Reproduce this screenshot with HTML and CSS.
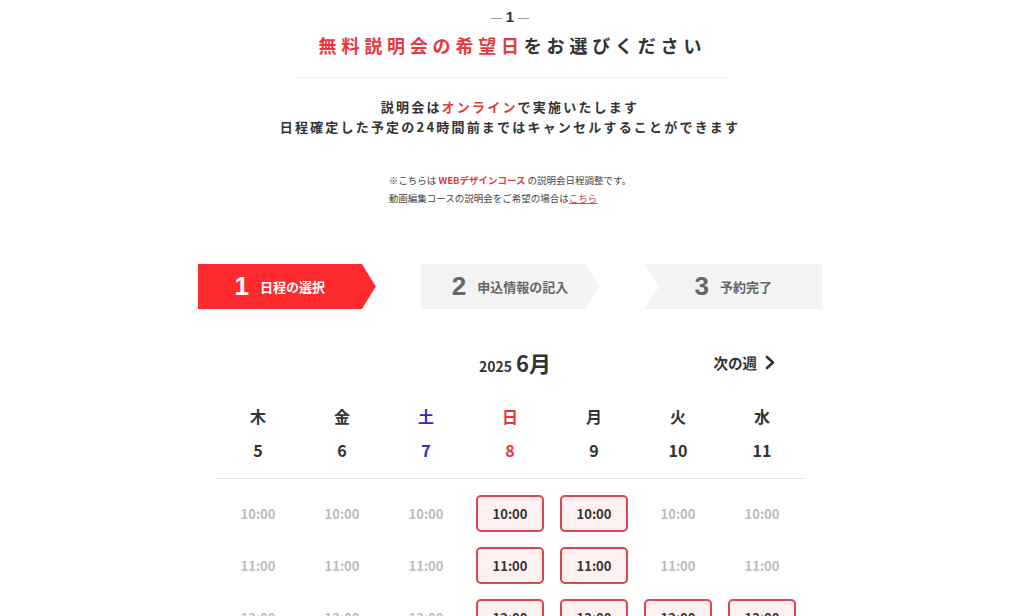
FILE: index.html
```html
<!DOCTYPE html>
<html lang="ja">
<head>
    <meta charset="UTF-8">
    <meta name="viewport" content="width=device-width, initial-scale=1.0">
    <title>無料説明会の予約</title>
    <link rel="stylesheet" href="styles.css">
</head>
<body>
    <div class="page">
        <div class="hero">
            <div class="step-label">1</div>
            <h1 class="title"><span class="accent">無料説明会の希望日</span>をお選びください</h1>
            <hr class="divider">
            <p class="lead">説明会は<span class="accent">オンライン</span>で実施いたします<br>日程確定した予定の24時間前まではキャンセルすることができます</p>
            <p class="note">※こちらは <strong class="accent">WEBデザインコース</strong> の説明会日程調整です。<br>動画編集コースの説明会をご希望の場合は<a href="#">こちら</a></p>
        </div>

        <ol class="steps">
            <li class="step step-first active"><span class="num">1</span><span class="label">日程の選択</span></li>
            <li class="step step-first step-mid"><span class="num">2</span><span class="label">申込情報の記入</span></li>
            <li class="step step-last"><span class="num">3</span><span class="label">予約完了</span></li>
        </ol>

        <div class="calendar">
            <div class="cal-head">
                <div></div>
                <div class="month"><span class="year">2025</span><span class="mon">6月</span></div>
                <a class="next" href="#">次の週
                    <svg width="10" height="15" viewBox="0 0 10 15"><path d="M2 2 L8 7.5 L2 13" fill="none" stroke="#333" stroke-width="2.6" stroke-linecap="round" stroke-linejoin="round"/></svg>
                </a>
            </div>
            <div class="days">
                <div class="day"><span class="wd">木</span><span class="dt">5</span></div>
                <div class="day"><span class="wd">金</span><span class="dt">6</span></div>
                <div class="day sat"><span class="wd">土</span><span class="dt">7</span></div>
                <div class="day sun"><span class="wd">日</span><span class="dt">8</span></div>
                <div class="day"><span class="wd">月</span><span class="dt">9</span></div>
                <div class="day"><span class="wd">火</span><span class="dt">10</span></div>
                <div class="day"><span class="wd">水</span><span class="dt">11</span></div>
            </div>
            <div class="slots">
                <span class="slot off">10:00</span>
                <span class="slot off">10:00</span>
                <span class="slot off">10:00</span>
                <button class="slot">10:00</button>
                <button class="slot">10:00</button>
                <span class="slot off">10:00</span>
                <span class="slot off">10:00</span>

                <span class="slot off">11:00</span>
                <span class="slot off">11:00</span>
                <span class="slot off">11:00</span>
                <button class="slot">11:00</button>
                <button class="slot">11:00</button>
                <span class="slot off">11:00</span>
                <span class="slot off">11:00</span>

                <span class="slot off">12:00</span>
                <span class="slot off">12:00</span>
                <span class="slot off">12:00</span>
                <button class="slot">12:00</button>
                <button class="slot">12:00</button>
                <button class="slot">12:00</button>
                <button class="slot">12:00</button>
            </div>
        </div>
    </div>
</body>
</html>
```

FILE: styles.css
```css
body {
    margin: 0;
    padding: 0 4px 0 0;
    background: #fff;
    color: #333;
    font-family: "Noto Sans CJK JP", "Noto Sans", sans-serif;
}

.page {
    width: 625px;
    margin: 0 auto;
}

.accent {
    color: #e8383d;
}

/* heading */
.hero {
    text-align: center;
}

.step-label {
    display: flex;
    justify-content: center;
    align-items: center;
    gap: 4px;
    padding-top: 7px;
    height: 20px;
    font-family: "Liberation Sans", Arial, sans-serif;
    font-size: 15px;
    font-weight: bold;
    line-height: 20px;
}

.step-label::before,
.step-label::after {
    content: "";
    width: 11px;
    height: 1px;
    margin-top: 3px;
    background: #999;
}

.title {
    margin: 4px 0 0;
    font-size: 18px;
    line-height: 28px;
    letter-spacing: 4.8px;
    text-indent: 4.8px;
    font-weight: bold;
}

.divider {
    width: 431px;
    margin: 18px auto 0;
    border: none;
    border-top: 1px solid #eeeeee;
}

.lead {
    margin: 19px 0 0;
    font-size: 13px;
    line-height: 20px;
    letter-spacing: 2.2px;
    font-weight: bold;
}

.note {
    display: inline-block;
    margin: 34px 0 0;
    text-align: left;
    font-size: 9.5px;
    line-height: 18px;
    color: #444;
}

.note strong {
    font-weight: bold;
}

.note a {
    color: #d9434a;
}

/* steps */
.steps {
    display: flex;
    gap: 45px;
    margin: 57px 0 0;
    padding: 0;
    list-style: none;
}

.step {
    display: flex;
    align-items: center;
    justify-content: center;
    gap: 11px;
    width: 179px;
    height: 45px;
    background: #f3f3f3;
    color: #666;
    box-sizing: border-box;
}

.step-first {
    clip-path: polygon(0 0, calc(100% - 14px) 0, 100% 50%, calc(100% - 14px) 100%, 0 100%);
    padding-right: 14px;
}

.step-mid {
    padding-left: 0;
    padding-right: 0;
}

.step-last {
    clip-path: polygon(0 0, 100% 0, 100% 100%, 0 100%, 15px 50%);
    padding-left: 0;
}

.step.active {
    background: #ff2a2e;
    color: #fff;
}

.step .num {
    font-family: "Liberation Sans", Arial, sans-serif;
    font-size: 26px;
    font-weight: bold;
}

.step .label {
    font-size: 13px;
    font-weight: bold;
}

/* calendar */
.calendar {
    width: 588px;
    margin: 37px auto 0;
}

.cal-head {
    display: grid;
    grid-template-columns: 1fr auto 1fr;
    align-items: center;
    height: 30px;
}

.month {
    display: flex;
    align-items: baseline;
    gap: 4px;
    padding-left: 10px;
    font-weight: bold;
}

.year {
    font-size: 14px;
}

.mon {
    font-size: 22px;
}

.next {
    justify-self: end;
    display: flex;
    align-items: center;
    gap: 8px;
    padding-right: 29px;
    color: #333;
    font-size: 14.5px;
    font-weight: bold;
    text-decoration: none;
}

.days {
    display: grid;
    grid-template-columns: repeat(7, 1fr);
    margin-top: 29px;
    padding-bottom: 17px;
    border-bottom: 1px solid #e6e6e6;
}

.day {
    display: flex;
    flex-direction: column;
    align-items: center;
    gap: 12px;
    font-size: 16px;
    font-weight: bold;
    line-height: 22px;
}

.sat {
    color: #2b2bd0;
}

.sun {
    color: #e8383d;
}

.slots {
    display: grid;
    grid-template-columns: repeat(7, 1fr);
    row-gap: 15px;
    justify-items: center;
    padding-top: 16px;
}

.slot {
    display: flex;
    align-items: center;
    justify-content: center;
    width: 68px;
    height: 37px;
    box-sizing: border-box;
    padding: 0;
    border: 2px solid #d8474c;
    border-radius: 5px;
    background: #fff1f2;
    color: #333;
    font-family: "Noto Sans CJK JP", sans-serif;
    font-size: 13px;
    font-weight: bold;
    cursor: pointer;
}

.slot.off {
    border-color: transparent;
    background: none;
    color: #bbb;
    cursor: default;
}
```
